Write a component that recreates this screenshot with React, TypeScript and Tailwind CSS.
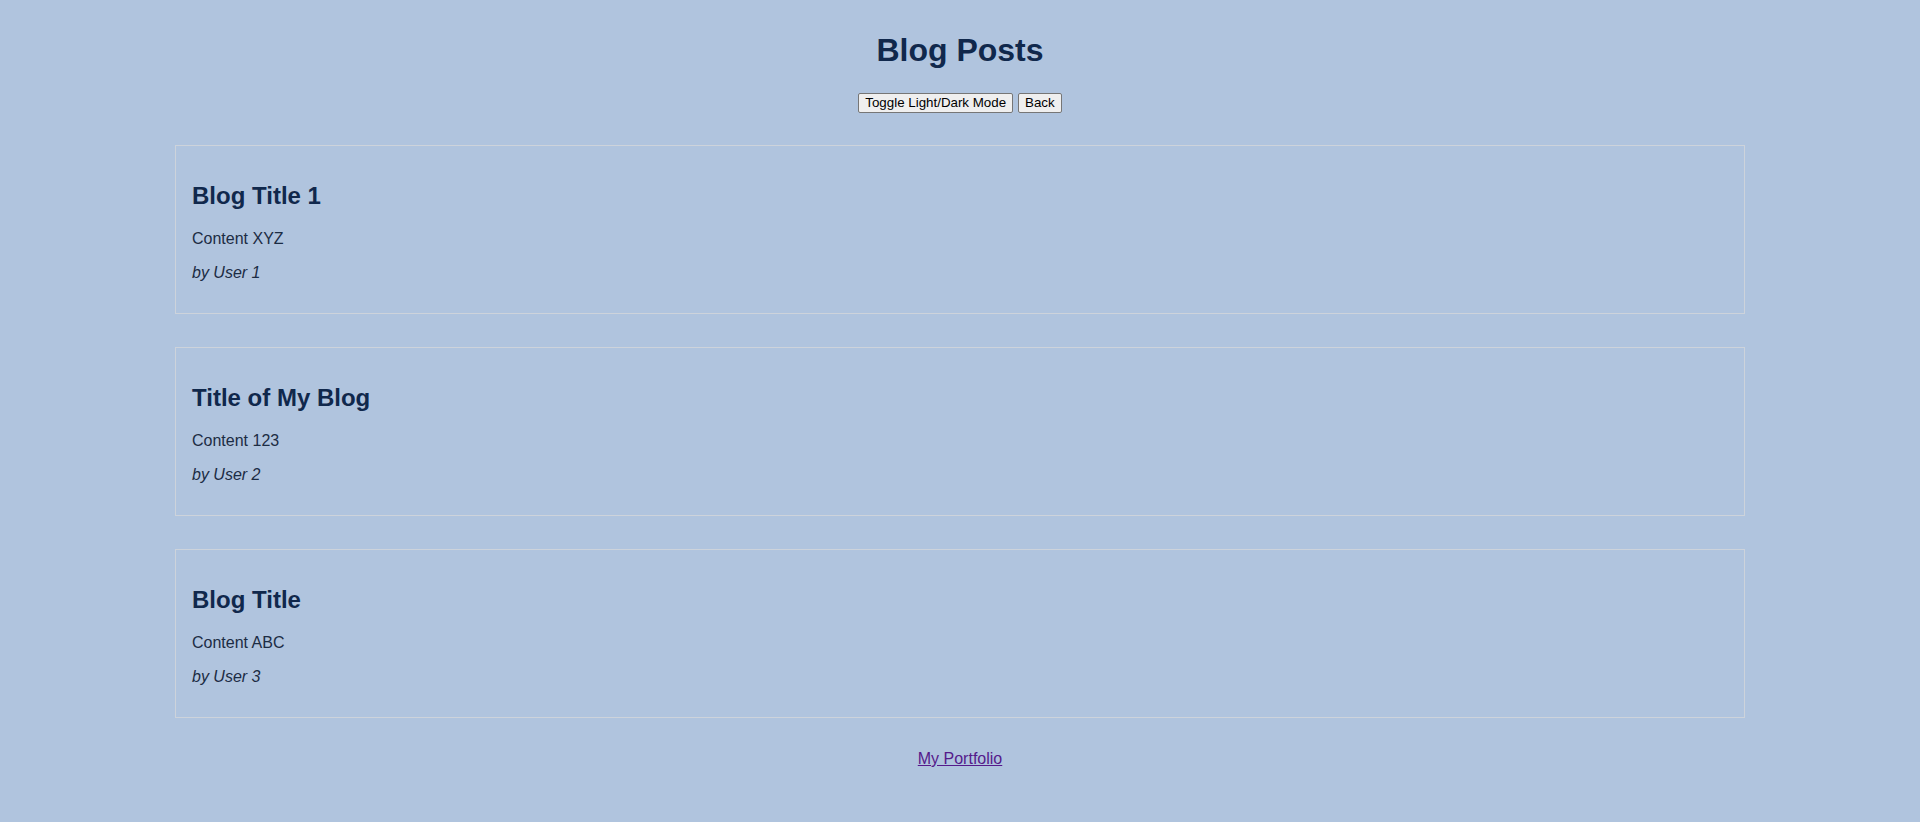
import React from "react";

const posts = [
  { title: "Blog Title 1", content: "Content XYZ", author: "User 1" },
  { title: "Title of My Blog", content: "Content 123", author: "User 2" },
  { title: "Blog Title", content: "Content ABC", author: "User 3" },
];

export default function App() {
  return (
    <div
      className="min-h-[822px] bg-[#b0c4de] text-[#12284a] pt-[32px]"
      style={{ fontFamily: '"Liberation Sans", Arial, sans-serif' }}
    >
      <h1 className="text-center text-[32px] leading-[37px] font-bold text-[#10284c]">
        Blog Posts
      </h1>
      <div className="mt-[24px] flex justify-center gap-[5px]">
        <button className="h-[20px] px-[6px] text-[13.33px] leading-[16px] text-black bg-[#efefef] border border-[#767676] rounded-[2px]">
          Toggle Light/Dark Mode
        </button>
        <button className="h-[20px] px-[6px] text-[13.33px] leading-[16px] text-black bg-[#efefef] border border-[#767676] rounded-[2px]">
          Back
        </button>
      </div>
      <div className="mt-[32px] flex flex-col gap-[33px]">
        {posts.map((p) => (
          <div
            key={p.title}
            className="w-[1570px] mx-auto border border-[#cdd3db] pt-[36px] pb-[31px] px-[16px]"
          >
            <h2 className="text-[24px] leading-[28px] font-bold text-[#10284c]">{p.title}</h2>
            <p className="mt-[20px] text-[16px] leading-[18px] text-[#1c2c44]">{p.content}</p>
            <p className="mt-[16px] text-[16px] leading-[18px] italic text-[#1c2c44]">by {p.author}</p>
          </div>
        ))}
      </div>
      <div className="mt-[29px] text-center">
        <a href="#" className="text-[16px] leading-[18px] underline text-[#551a8b]">
          My Portfolio
        </a>
      </div>
    </div>
  );
}
